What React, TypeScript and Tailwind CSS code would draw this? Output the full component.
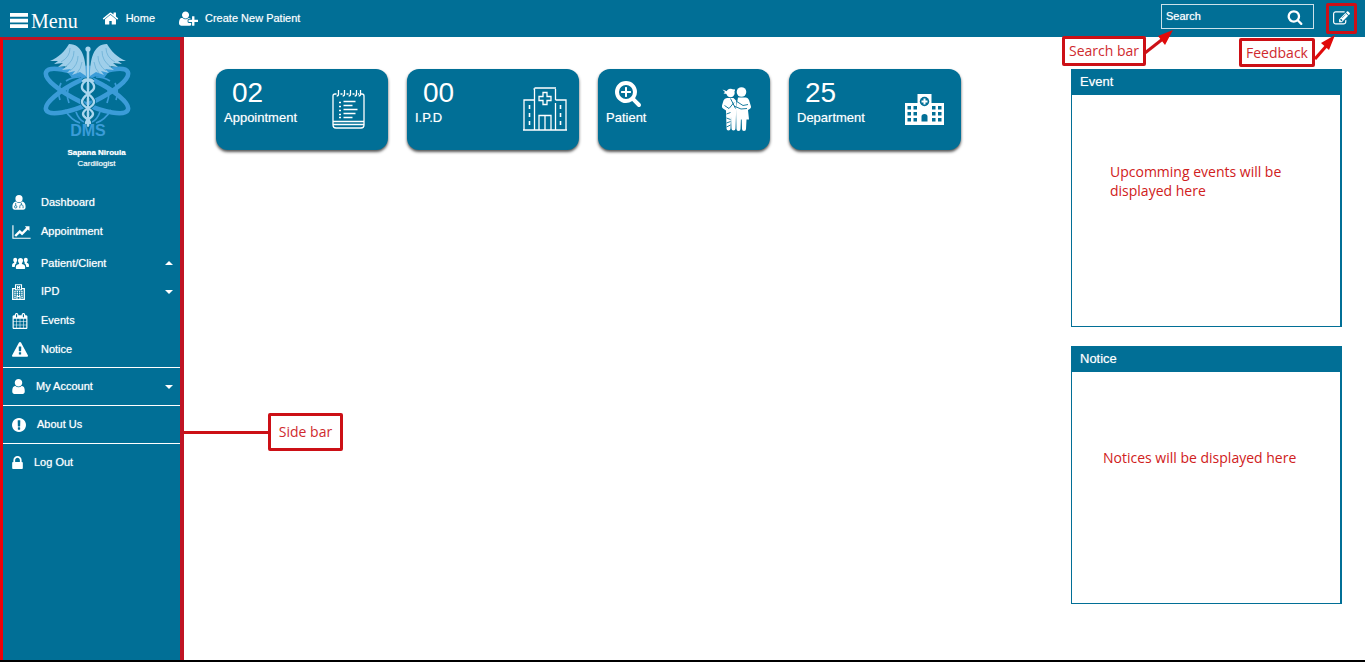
import type { ReactNode } from 'react';

type IconProps = { className?: string; d: string; wide?: boolean };

function Glyph({ className, d, wide }: IconProps) {
  return (
    <svg aria-hidden="true" viewBox={wide ? '0 0 2048 1792' : '0 0 1792 1792'} fill="currentColor" className={className}>
      <path d={d} />
    </svg>
  );
}

const HOME =
  'M1472 992v480q0 26-19 45t-45 19h-384v-384h-256v384h-384q-26 0-45-19t-19-45v-480q0-1 .5-3t.5-3l575-474 575 474q1 2 1 6zm223-69l-62 74q-8 9-21 11h-3q-13 0-21-7l-692-577-692 577q-12 8-24 7-13-2-21-11l-62-74q-8-10-7-23.5t11-21.5l719-599q32-26 76-26t76 26l244 204v-195q0-14 9-23t23-9h192q14 0 23 9t9 23v408l219 182q10 8 11 21.5t-7 23.5z';
const USER_PLUS =
  'M704 896q-159 0-271.5-112.5t-112.5-271.5 112.5-271.5 271.5-112.5 271.5 112.5 112.5 271.5-112.5 271.5-271.5 112.5zm960 128h352q13 0 22.5 9.5t9.5 22.5v192q0 13-9.5 22.5t-22.5 9.5h-352v352q0 13-9.5 22.5t-22.5 9.5h-192q-13 0-22.5-9.5t-9.5-22.5v-352h-352q-13 0-22.5-9.5t-9.5-22.5v-192q0-13 9.5-22.5t22.5-9.5h352v-352q0-13 9.5-22.5t22.5-9.5h192q13 0 22.5 9.5t9.5 22.5v352zm-736 224q0 52 38 90t90 38h256v238q-68 50-171 50h-874q-121 0-194-69t-73-190q0-53 3.5-103.5t14-109 26.5-108.5 43-97.5 62-81 85.5-53.5 111.5-20q19 0 39 17 79 61 154.5 91.5t164.5 30.5 164.5-30.5 154.5-91.5q20-17 39-17 132 0 217 96h-223q-52 0-90 38t-38 90v192z';
const SEARCH =
  'M1216 832q0-185-131.5-316.5t-316.5-131.5-316.5 131.5-131.5 316.5 131.5 316.5 316.5 131.5 316.5-131.5 131.5-316.5zm512 832q0 52-38 90t-90 38q-54 0-90-38l-343-342q-179 124-399 124-143 0-273.5-55.5t-225-150-150-225-55.5-273.5 55.5-273.5 150-225 225-150 273.5-55.5 273.5 55.5 225 150 150 225 55.5 273.5q0 220-124 399l343 343q37 37 37 90z';
const SEARCH_PLUS =
  'M1088 800v64q0 13-9.5 22.5t-22.5 9.5h-224v224q0 13-9.5 22.5t-22.5 9.5h-64q-13 0-22.5-9.5t-9.5-22.5v-224h-224q-13 0-22.5-9.5t-9.5-22.5v-64q0-13 9.5-22.5t22.5-9.5h224v-224q0-13 9.5-22.5t22.5-9.5h64q13 0 22.5 9.5t9.5 22.5v224h224q13 0 22.5 9.5t9.5 22.5z' +
  SEARCH;
const EDIT =
  'M888 1184l116-116-152-152-116 116v56h96v96h56zm440-720q-16-16-33 1l-350 350q-17 17-1 33t33-1l350-350q17-17 1-33zm80 594v190q0 119-84.5 203.5t-203.5 84.5h-832q-119 0-203.5-84.5t-84.5-203.5v-832q0-119 84.5-203.5t203.5-84.5h832q63 0 117 25 15 7 18 23 3 17-9 29l-49 49q-14 14-32 8-23-6-45-6h-832q-66 0-113 47t-47 113v832q0 66 47 113t113 47h832q66 0 113-47t47-113v-126q0-13 9-22l64-64q15-15 35-7t20 29zm-96-738l288 288-672 672h-288v-288zm444 132l-92 92-288-288 92-92q28-28 68-28t68 28l152 152q28 28 28 68t-28 68z';
const USER =
  'M1536 1399q0 109-62.5 187t-150.5 78h-854q-88 0-150.5-78t-62.5-187q0-85 8.5-160.5t31.5-152 58.5-131 94-89 134.5-34.5q131 128 313 128t313-128q76 0 134.5 34.5t94 89 58.5 131 31.5 152 8.5 160.5zm-256-887q0 159-112.5 271.5t-271.5 112.5-271.5-112.5-112.5-271.5 112.5-271.5 271.5-112.5 271.5 112.5 112.5 271.5z';
const LOCK =
  'M640 768h512v-192q0-106-75-181t-181-75-181 75-75 181v192zm832 96v576q0 40-28 68t-68 28h-960q-40 0-68-28t-28-68v-576q0-40 28-68t68-28h32v-192q0-184 132-316t316-132 316 132 132 316v192h32q40 0 68 28t28 68z';
const INFO =
  'M896 128q209 0 385.5 103t279.5 279.5 103 385.5-103 385.5-279.5 279.5-385.5 103-385.5-103-279.5-279.5-103-385.5 103-385.5 279.5-279.5 385.5-103zm128 1247v-190q0-14-9-23.5t-22-9.5h-192q-13 0-23 10t-10 23v190q0 13 10 23t23 10h192q13 0 22-9.5t9-23.5zm-2-344l18-621q0-12-10-18-10-8-24-8h-220q-14 0-24 8-10 6-10 18l17 621q0 10 10 17.5t24 7.5h185q14 0 23.5-7.5t10.5-17.5z';
const WARNING =
  'M1024 1375v-190q0-14-9.5-23.5t-22.5-9.5h-192q-13 0-22.5 9.5t-9.5 23.5v190q0 14 9.5 23.5t22.5 9.5h192q13 0 22.5-9.5t9.5-23.5zm-2-374l18-459q0-12-10-19-13-11-24-11h-220q-11 0-24 11-10 7-10 21l17 457q0 10 10 16.5t24 6.5h185q14 0 23.5-6.5t10.5-16.5zm-14-934l768 1408q35 63-2 126-17 29-46.5 46t-63.5 17h-1536q-34 0-63.5-17t-46.5-46q-37-63-2-126l768-1408q17-31 47-49t65-18 65 18 47 49z';
const CALENDAR =
  'M192 1664h288v-288h-288v288zm352 0h320v-288h-320v288zm-352-352h288v-320h-288v320zm352 0h320v-320h-320v320zm-352-384h288v-288h-288v288zm736 736h320v-288h-320v288zm-384-736h320v-288h-320v288zm768 736h288v-288h-288v288zm-384-352h320v-320h-320v320zm-352-864v-288q0-13-9.5-22.5t-22.5-9.5h-64q-13 0-22.5 9.5t-9.5 22.5v288q0 13 9.5 22.5t22.5 9.5h64q13 0 22.5-9.5t9.5-22.5zm736 864h288v-320h-288v320zm-384-384h320v-288h-320v288zm384 0h288v-288h-288v288zm32-480v-288q0-13-9.5-22.5t-22.5-9.5h-64q-13 0-22.5 9.5t-9.5 22.5v288q0 13 9.5 22.5t22.5 9.5h64q13 0 22.5-9.5t9.5-22.5zm384-64v1280q0 52-38 90t-90 38h-1408q-52 0-90-38t-38-90v-1280q0-52 38-90t90-38h128v-96q0-66 47-113t113-47h64q66 0 113 47t47 113v96h384v-96q0-66 47-113t113-47h64q66 0 113 47t47 113v96h128q52 0 90 38t38 90z';
const CHART =
  'M2048 1536v128h-2048v-1536h128v1408h1920zm-128-1248v435q0 21-19.5 29.5t-35.5-7.5l-121-121-633 633q-10 10-23 10t-23-10l-233-233-416 416-192-192 585-585q10-10 23-10t23 10l233 233 464-464-121-121q-16-16-7.5-35.5t29.5-19.5h435q14 0 23 9t9 23z';

function GroupIcon() {
  return (
    <svg aria-hidden="true" viewBox="0 0 17 12" fill="#fff" className="h-3 w-[17px]">
      <path d="M3.200.8q2 0 2 2.200 0 1.500-.9 2.300l.2.900q-1.600.8-1.800 3.800H.6Q0 10 0 9c0-2 .5-2.600 2.200-3.200v-.6Q1.200 4.500 1.200 3q0-2.200 2-2.200zM13.800.8q2 0 2 2.200 0 1.500-1 2.200v.6C16.500 6.400 17 7 17 9q0 1-.6 1h-2.100q-.2-3-1.800-3.800l.2-.9q-.9-.8-.9-2.300 0-2.200 2-2.200z" />
      <path d="M8.500 1Q11 1 11 3.600q0 1.700-1.100 2.600v.7c2.300.5 3.300 1.200 3.300 3.900q0 1.200-.8 1.200H4.600q-.8 0-.8-1.200c0-2.700 1-3.400 3.300-3.900v-.7Q6 5.300 6 3.600 6 1 8.500 1z" />
    </svg>
  );
}

function DoctorIcon() {
  return (
    <svg aria-hidden="true" viewBox="0 0 14 15" className="h-[15px] w-[14px]">
      <circle cx="7" cy="3.700" r="3.600" fill="#fff" />
      <path d="M3.600 6.600C1.200 7 .4 9.500 .4 12c0 1.800 1 2.800 2.400 2.800h8.400c1.400 0 2.400-1 2.400-2.800 0-2.500-.8-5-3.200-5.400Q7 9.200 3.600 6.600z" fill="#fff" />
      <circle cx="3.700" cy="11.800" r="1.200" fill="none" stroke="#016f96" strokeWidth="0.800" />
      <path d="M3.700 10.500V8M7.800 13.200v-1.700c0-1.200.7-1.700 1.600-1.700s1.700.5 1.700 1.700v1.700M9.400 9.800V7.800" fill="none" stroke="#016f96" strokeWidth="0.800" />
    </svg>
  );
}

function WardIcon() {
  return (
    <svg aria-hidden="true" viewBox="0 0 13 16" fill="none" stroke="#fff" strokeWidth="1.300" className="h-4 w-[13px]">
      <path d="M3.500 4.700H.7v10.600h11.600V4.700H9.500" />
      <path d="M3.500 5.800V.7h6v5.100zM5.500 2v2.800M7.500 2v2.800M5.500 3.400h2M5 15.500v-3h3v3" strokeWidth="1.100" />
      <path d="M2.300 7.500h8.600M2.300 9.500h8.600M2.300 11.500h8.600" strokeDasharray="1.400 0.900" />
      <path d="M2.300 13.500h1.400M9.400 13.500h1.400" />
    </svg>
  );
}

function NotepadIcon() {
  return (
    <svg aria-hidden="true" viewBox="0 0 33 40" fill="none" stroke="#fff" strokeWidth="1.300" className="h-10 w-[33px]">
      <path d="M4.500 5H3Q1 5 1 7v29q0 3 3 3h25q3 0 3-3V7q0-2-2-2h-1.500M8.500 5h2M14.500 5h2M20.500 5h2M26 5h1" />
      <path d="M1 32.500h31M1 35.500h31" />
      <path d="M6.500 1v4q0 2-1.800 2M12.500 1v4q0 2-1.800 2M18.500 1v4q0 2-1.800 2M24.500 1v4q0 2-1.800 2M28.500 1v4q0 2-1.800 2" />
      <path d="M7 13.500h2M7 17.500h2M7 21.500h2M7 25.500h2M7 28.500h2" />
      <path d="M11.500 12.500h12M11.500 16.500h9M11.500 20.500h14M11.500 24.500h12M11.500 28.500h9" />
    </svg>
  );
}

function HospitalOutlineIcon() {
  return (
    <svg aria-hidden="true" viewBox="0 0 44 44" fill="none" stroke="#fff" strokeWidth="1.300" className="size-11">
      <path d="M1 43V13h10.500v30zM32.500 16v27M32.500 13H43v30M11.500 13V2h-1M11.500 1H33M32.500 2v11M0 43h44" />
      <path d="M20 5.500h4v4h4v4h-4v4h-4v-4h-4v-4h4zM16 43V28.500h12V43M22 29v14" />
      <path d="M6.500 18v4M6.500 26v4M6.500 34v4M37.500 18v4M37.500 26v4M37.500 34v4" strokeWidth="1.600" />
    </svg>
  );
}

function PatientCareIcon() {
  return (
    <svg aria-hidden="true" viewBox="0 0 30 44" fill="#fff" className="h-11 w-11">
      <circle cx="9.500" cy="6" r="4.200" />
      <path d="M1.500 2.500l5 2 7-2.500.5 2-7.500 3-4-.5L4 5z" />
      <circle cx="20.500" cy="5" r="4.800" />
      <path d="M6 11h6.500l3 3-1 27.500q0 2-2 2t-2-2l-.5-12-.5 12q0 2-2 2t-2-2L5 23.500l-3-2q-1.500-1-1-3l1.500-5Q3.500 11 6 11z" />
      <path d="M17 10.500h8q2 0 3 2.500l2 6.500q.3 1.500-1 2.300l-2 1.200 1 9.500h-2.500l-.5 9.500q0 2-2 2t-2-2l-.3-9.500h-.8l-.4 9.500q0 2-2 2t-2-2L15 21z" />
      <path d="M9.500 11.500l5 10M3.500 18.500l4.500 3 5-6M15 14l7 4.500 5-1M13 19l7 3 6-.5M5.500 27l4-1.500M5.500 31l4 1.500M5.500 36l4-1.500M5.500 40l4-2" fill="none" stroke="#016f96" strokeWidth="0.900" />
    </svg>
  );
}

function HospitalIcon() {
  return (
    <svg aria-hidden="true" viewBox="0 0 39 31" className="h-[31px] w-[39px]">
      <path d="M0 9h12.500V0h14v9H39v22H0z" fill="#fff" />
      <circle cx="19.500" cy="7.500" r="4.700" fill="#016f96" />
      <path d="M18.500 4.500h2v2h2v2h-2v2h-2v-2h-2v-2h2z" fill="#fff" />
      <path
        d="M2.500 12H6v3.500H2.500zM8.500 12H12v3.500H8.500zM2.500 18H6v3.500H2.500zM8.500 18H12v3.500H8.500zM2.500 24H6v3.500H2.500zM8.500 24H12v3.500H8.500zM27 12h3.500v3.500H27zM33 12h3.500v3.500H33zM27 18h3.500v3.500H27zM33 18h3.500v3.500H33zM27 24h3.500v3.500H27zM33 24h3.500v3.500H33zM16.500 27.500v-5q0-2.500 3-2.500t3 2.500v5z"
        fill="#016f96"
      />
    </svg>
  );
}

function Logo() {
  return (
    <svg role="img" aria-label="DMS" viewBox="0 0 90 98" className="h-[98px] w-[90px] [text-shadow:none]">
      <g fill="none" stroke="#3b9cd8" strokeWidth="1.700">
        <path d="M19 41q-4 8-1 17M73 41q4 8 1 17M23 68q6 10 15 13M69 68q-6 10-15 13M34 70q3 8 8 10M58 70q-3 8-8 10M24 39q6-4 14-4M68 39q-6-4-14-4M27 61q-4-10 1-18M65 61q4-10-1-18" />
      </g>
      <path d="M23 27q23-7 46 0l-7 9q-16-5-32 0z" fill="#3b9cd8" />
      <g fill="none" stroke="#3b9cd8" strokeWidth="4.600">
        <ellipse cx="45" cy="49" rx="45" ry="12.500" transform="rotate(25 45 49)" />
        <ellipse cx="45" cy="49" rx="45" ry="12.500" transform="rotate(-25 45 49)" />
      </g>
      <g fill="#9fcfea">
        <path d="M44 34C44 18 41 2 27 2 23 9 17 15 8 19l8 0-4 3 9-1-5 4 9-1-5 4 9-1-4 4 8-2-3 4 8-3z" />
        <path d="M48 34C48 18 51 2 65 2c4 7 10 13 19 17l-8 0 4 3-9-1 5 4-9-1 5 4-9-1 4 4-8-2 3 4-8-3z" />
      </g>
      <path d="M28 6q0 9-9 14M32 9q0 10-9 16M36 14q0 9-8 15M40 20q-1 7-5 11M64 6q0 9 9 14M60 9q0 10 9 16M56 14q0 9 8 15M52 20q1 7 5 11" fill="none" stroke="#6bb0d6" strokeWidth="0.800" />
      <path d="M46 7v77" stroke="#a9d6ee" strokeWidth="2.600" />
      <g fill="none" stroke="#016f96" strokeWidth="4">
        <path d="M41 39c4-4 12 2 11 7-1 5-12 7-12 14 0 6 11 6 11 12 0 4-7 5-7 9" />
        <path d="M51 39c-4-4-12 2-11 7 1 5 12 7 12 14 0 6-11 6-11 12 0 4 7 5 7 9" />
      </g>
      <g fill="none" stroke="#a9d6ee" strokeWidth="2.400" strokeLinecap="round">
        <path d="M46 7v77" strokeWidth="2" />
        <path d="M41 39c4-4 12 2 11 7-1 5-12 7-12 14 0 6 11 6 11 12 0 4-7 5-7 9" />
        <path d="M51 39c-4-4-12 2-11 7 1 5 12 7 12 14 0 6-11 6-11 12 0 4 7 5 7 9" />
      </g>
      <circle cx="46" cy="7" r="2.600" fill="#a9d6ee" />
      <text x="46" y="94" textAnchor="middle" fill="#3b9cd8" fontSize="16" fontWeight="700" fontFamily="'Liberation Sans Narrow', 'Liberation Sans', sans-serif">
        DMS
      </text>
    </svg>
  );
}

function Caret({ up }: { up?: boolean }) {
  return (
    <svg aria-hidden="true" viewBox="0 0 8 4" fill="currentColor" className="h-1 w-2">
      <path d={up ? 'M0 4l4-4 4 4z' : 'M0 0h8l-4 4z'} />
    </svg>
  );
}

type NavProps = { icon: ReactNode; label: string; caret?: 'up' | 'down'; tall?: boolean };

function NavItem({ icon, label, caret, tall }: NavProps) {
  const inner = (
    <>
      <span className="flex w-[29px] shrink-0">{icon}</span>
      <span className="flex-1 text-left [text-shadow:0_0_1px_#ffffffb0]">{label}</span>
      {caret && <Caret up={caret === 'up'} />}
    </>
  );
  const box = tall ? 'flex h-[31px] w-full items-center pl-[9px] pr-[7px] pt-[3px]' : 'flex h-[29px] w-full items-center pl-[9px] pr-[7px]';
  return (
    <li>
      {caret ? (
        <button type="button" className={box}>
          {inner}
        </button>
      ) : (
        <a href="#" className={box}>
          {inner}
        </a>
      )}
    </li>
  );
}

function AccountItem({ icon, label, caret }: { icon: ReactNode; label: string; caret?: boolean }) {
  const inner = (
    <>
      {icon}
      <span className="flex-1 text-left [text-shadow:0_0_1px_#ffffffb0]">{label}</span>
      {caret && <Caret />}
    </>
  );
  const box = 'flex h-[37px] w-full items-center gap-[11px] pl-[9px] pr-[7px]';
  return (
    <li className="border-t border-white">
      {caret ? (
        <button type="button" className={box}>
          {inner}
        </button>
      ) : (
        <a href="#" className={box}>
          {inner}
        </a>
      )}
    </li>
  );
}

function StatCard({ value, label, icon }: { value: ReactNode; label: string; icon: ReactNode }) {
  return (
    <a href="#" className="flex h-[81px] w-[172px] items-start justify-between rounded-xl bg-[#016f96] px-2 text-white shadow-[0_2px_3px_#555]">
      <span className="flex flex-col pt-2">
        <span className="flex h-8 items-center pl-2 text-[28px] leading-8">{value}</span>
        <span className="text-[13px] leading-[18px] [text-shadow:0_0_1px_#ffffff80]">{label}</span>
      </span>
      <span className="flex h-20 w-12 items-center">{icon}</span>
    </a>
  );
}

function Panel({ title, children }: { title: string; children: ReactNode }) {
  return (
    <section className="flex h-[258px] flex-col border border-r-2 border-[#016f96] bg-white">
      <h2 className="h-[25px] shrink-0 bg-[#016f96] pl-2 text-[13px] leading-6 text-white [text-shadow:0_0_1px_#ffffff80]">{title}</h2>
      {children}
    </section>
  );
}

const callout =
  "flex items-center justify-center rounded-[2px] border-3 border-[#cc1016] bg-white font-['Open_Sans',sans-serif] text-sm [text-shadow:none] whitespace-nowrap text-[#cf2a2e]";

export default function App() {
  return (
    <div className="flex min-h-screen flex-col bg-white font-['Liberation_Sans',Arial,sans-serif]">
      <header className="relative z-10 flex h-[37px] items-center bg-[#016f96] pr-2 pl-2.5 text-white">
        <button type="button" className="flex items-center gap-[3px] pt-1 font-['Liberation_Serif',serif] text-xl leading-none">
          <svg aria-hidden="true" viewBox="0 0 18 15" fill="currentColor" className="h-[15px] w-[18px]">
            <path d="M0 0h18v3.700H0zM0 5.700h18v3.700H0zM0 11.300h18V15H0z" />
          </svg>
          Menu
        </button>
        <nav className="flex flex-1 items-center gap-6 pl-6 text-[11px] [text-shadow:0_0_1px_#ffffff80]">
          <a href="#" className="flex items-center gap-[7px]">
            <Glyph d={HOME} className="size-[17px]" />
            Home
          </a>
          <a href="#" className="flex items-center gap-[7px]">
            <Glyph d={USER_PLUS} wide className="h-[17px] w-[19px]" />
            Create New Patient
          </a>
        </nav>
        <form className="relative mr-3 mb-1 flex h-[25px] w-[153px] items-center border border-white/80 pr-2.5" onSubmit={(e) => e.preventDefault()}>
          <input
            type="text"
            aria-label="Search"
            placeholder="Search"
            className="min-w-0 flex-1 bg-transparent pl-1 text-[11px] text-white outline-none [text-shadow:0_0_1px_#ffffffb0] placeholder:text-white"
          />
          <button type="submit" aria-label="Submit search">
            <Glyph d={SEARCH} className="size-4" />
          </button>
          <div className={`absolute top-[31px] -left-[100px] h-[30px] w-[84px] ${callout}`}>Search bar</div>
          <svg aria-hidden="true" viewBox="0 0 28 24" className="absolute top-[25px] -left-[17px] h-6 w-7">
            <path d="M0 23L19 8" stroke="#cc1016" strokeWidth="3" />
            <path d="M28 0L13 6l7 9z" fill="#e00a0a" />
          </svg>
        </form>
        <div className="relative">
          <button type="button" aria-label="Give feedback" className="flex size-[31px] items-center justify-center rounded-[2px] border-3 border-[#cc1016]">
            <Glyph d={EDIT} className="size-[17px]" />
          </button>
          <div className={`absolute top-[35px] -left-[87px] h-[29px] w-[76px] ${callout}`}>Feedback</div>
          <svg aria-hidden="true" viewBox="0 0 22 26" className="absolute top-[32px] -left-[12px] h-[26px] w-[22px]">
            <path d="M1 24L14 9" stroke="#e00a0a" strokeWidth="3" />
            <path d="M21 0L7 8l8 7z" fill="#e00a0a" />
          </svg>
        </div>
      </header>

      <div className="flex flex-1">
        <aside className="relative flex w-[184px] shrink-0 flex-col border-t-3 border-r-4 border-l-3 border-[#c01424] border-l-[#f00008] bg-[#016f96] text-white">
          <div className="flex flex-col pt-[2px] text-[8px] leading-[11px] [text-shadow:0_0_1px_#ffffffb0]">
            <div className="flex justify-center pr-[10px]">
              <Logo />
            </div>
            <div className="mt-[7px] flex flex-col items-center pl-[10px]">
              <strong>Sapana Niroula</strong>
              <span>Cardilogist</span>
            </div>
          </div>
          <ul className="mt-[19px] flex flex-col pb-[3px] text-[11px]">
            <NavItem icon={<DoctorIcon />} label="Dashboard" />
            <NavItem icon={<Glyph d={CHART} wide className="h-4 w-[19px]" />} label="Appointment" />
            <NavItem icon={<GroupIcon />} label="Patient/Client" caret="up" tall />
            <NavItem icon={<WardIcon />} label="IPD" caret="down" />
            <NavItem icon={<Glyph d={CALENDAR} className="size-4" />} label="Events" />
            <NavItem icon={<Glyph d={WARNING} className="size-4" />} label="Notice" />
          </ul>
          <ul className="flex flex-col text-[11px]">
            <AccountItem
              icon={
                <svg aria-hidden="true" viewBox="256 128 1280 1536" fill="currentColor" className="h-[15px] w-[13px]">
                  <path d={USER} />
                </svg>
              }
              label="My Account"
              caret
            />
            <AccountItem
              icon={
                <svg aria-hidden="true" viewBox="128 128 1536 1536" fill="currentColor" className="size-[14px]">
                  <path d={INFO} />
                </svg>
              }
              label="About Us"
            />
            <AccountItem
              icon={
                <svg aria-hidden="true" viewBox="320 128 1152 1408" fill="currentColor" className="h-[13px] w-[11px]">
                  <path d={LOCK} />
                </svg>
              }
              label="Log Out"
            />
          </ul>
          <div className="absolute top-[373px] left-[181px] flex items-center">
            <span className="h-[3px] w-[84px] bg-[#cc1016]" />
            <div className={`h-[38px] w-[75px] ${callout}`}>Side bar</div>
          </div>
        </aside>

        <main className="flex flex-1 items-start justify-between gap-6 pt-8 pr-[23px] pl-8">
          <div className="flex flex-wrap gap-[19px]">
            <StatCard value="02" label="Appointment" icon={<NotepadIcon />} />
            <StatCard value="00" label="I.P.D" icon={<HospitalOutlineIcon />} />
            <StatCard value={<Glyph d={SEARCH_PLUS} className="size-7" />} label="Patient" icon={<PatientCareIcon />} />
            <StatCard value="25" label="Department" icon={<HospitalIcon />} />
          </div>
          <div className="flex w-[271px] shrink-0 flex-col gap-[19px]">
            <Panel title="Event">
              <p className="px-[38px] pt-[67px] font-['Open_Sans',sans-serif] text-sm leading-[19px] text-[#d02020]">Upcomming events will be displayed here</p>
            </Panel>
            <Panel title="Notice">
              <p className="pt-[76px] pl-[31px] font-['Open_Sans',sans-serif] text-sm leading-[19px] text-[#d02020]">Notices will be displayed here</p>
            </Panel>
          </div>
        </main>
      </div>
      <footer className="h-[2px] bg-black" />
    </div>
  );
}
